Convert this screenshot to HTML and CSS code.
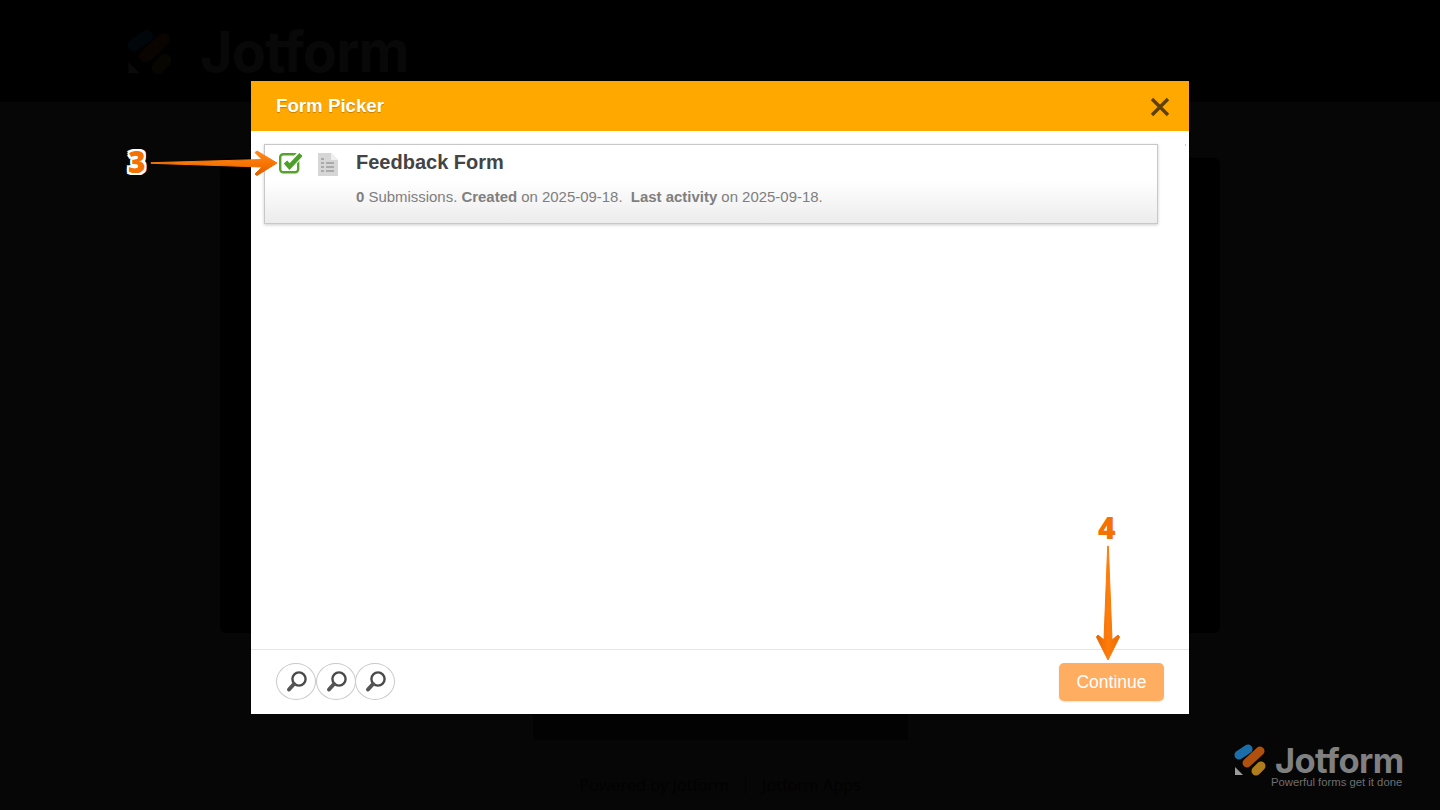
FILE: index.html
```html
<!DOCTYPE html>
<html>
<head>
    <title>Form Picker</title>
    <link rel="stylesheet" href="styles.css">
</head>
<body>
    <div class="page-header">
        <svg class="page-logo-mark" width="48" height="48" viewBox="0 0 34 34">
            <path d="M5 12 L14 6" stroke="#01060a" stroke-width="9" stroke-linecap="round"/>
            <path d="M13 20 L26 8" stroke="#0a0401" stroke-width="9" stroke-linecap="round"/>
            <path d="M22 28 L27 23" stroke="#080601" stroke-width="9" stroke-linecap="round"/>
            <path d="M1 24 L9 32 H1 Z" fill="#0a0a0a"/>
        </svg>
        <span class="page-logo-text">Jotform</span>
    </div>
    <div class="page-body">
        <div class="page-card"></div>
        <div class="page-submit"></div>
        <div class="page-footer">
            <span>Powered by Jotform</span>
            <span class="page-footer-sep"></span>
            <span>Jotform Apps</span>
        </div>
    </div>

    <div class="corner-logo">
        <svg width="34" height="34" viewBox="0 0 34 34">
            <path d="M5 12 L14 6" stroke="#1a6fa8" stroke-width="9" stroke-linecap="round"/>
            <path d="M13 20 L26 8" stroke="#b0500f" stroke-width="9" stroke-linecap="round"/>
            <path d="M22 28 L27 23" stroke="#b07d1c" stroke-width="9" stroke-linecap="round"/>
            <path d="M1 24 L9 32 H1 Z" fill="#9a9a9a"/>
        </svg>
        <div class="corner-logo-text">
            <div class="corner-logo-name">Jotform</div>
            <div class="corner-logo-tag">Powerful forms get it done</div>
        </div>
    </div>

    <div class="modal">
        <div class="modal-header">
            <span class="modal-title">Form Picker</span>
            <svg class="modal-close" width="20" height="20" viewBox="0 0 20 20">
                <path d="M2 2 L18 18 M18 2 L2 18" stroke="#5e4000" stroke-width="3.4" fill="none"/>
            </svg>
        </div>
        <div class="modal-content">
            <span class="scroll-mark"></span>
            <div class="form-row">
                <svg class="form-check" width="24" height="22" viewBox="0 0 24 22">
                    <rect x="2.2" y="2.2" width="18" height="18" rx="3" fill="#fff" stroke="#56a32c" stroke-width="2.4"/>
                    <path d="M7.5 10 L11.5 14 L22 3" stroke="#fff" stroke-width="7.5" fill="none"/>
                    <path d="M7.5 10 L11.5 14.5 L23 2.5" stroke="#4d9e2a" stroke-width="4.6" fill="none"/>
                </svg>
                <svg class="form-doc" width="20" height="23" viewBox="0 0 20 23">
                    <path d="M0 0 H13 L20 7 V23 H0 Z" fill="#d6d6d6"/>
                    <path d="M13 0 L20 7 H13 Z" fill="#efefef"/>
                    <path d="M3 6 H6 M3 10 H6 M8 10 H16 M3 14 H6 M8 14 H16 M3 18 H6 M8 18 H16" stroke="#9c9c9c" stroke-width="1.6"/>
                </svg>
                <div class="form-info">
                    <div class="form-name">Feedback Form</div>
                    <div class="form-meta"><b>0</b> Submissions. <b>Created</b> on 2025-09-18.&nbsp; <b>Last activity</b> on 2025-09-18.</div>
                </div>
            </div>
        </div>
        <div class="modal-footer">
            <div class="zoom-buttons">
                <button class="zoom-button"><svg width="24" height="24" viewBox="0 0 24 24"><circle cx="15" cy="9" r="6.6" fill="#fff" stroke="#4a4a4a" stroke-width="2.4"/><path d="M10 14 L5 19.5" stroke="#555" stroke-width="4" stroke-linecap="round"/></svg></button>
                <button class="zoom-button"><svg width="24" height="24" viewBox="0 0 24 24"><circle cx="15" cy="9" r="6.6" fill="#fff" stroke="#4a4a4a" stroke-width="2.4"/><path d="M10 14 L5 19.5" stroke="#555" stroke-width="4" stroke-linecap="round"/></svg></button>
                <button class="zoom-button"><svg width="24" height="24" viewBox="0 0 24 24"><circle cx="15" cy="9" r="6.6" fill="#fff" stroke="#4a4a4a" stroke-width="2.4"/><path d="M10 14 L5 19.5" stroke="#555" stroke-width="4" stroke-linecap="round"/></svg></button>
            </div>
            <button class="continue-button">Continue</button>
        </div>
    </div>

    <!-- tutorial annotations -->
    <span class="step-number step-3">3</span>
    <span class="step-number step-4">4</span>
    <svg class="arrows" width="1440" height="810" viewBox="0 0 1440 810">
        <defs>
            <linearGradient id="arrow-h" x1="0" y1="0" x2="0" y2="1">
                <stop offset="0" stop-color="#ff8a1c"/>
                <stop offset="0.6" stop-color="#f57100"/>
                <stop offset="1" stop-color="#d95f00"/>
            </linearGradient>
            <linearGradient id="arrow-v" x1="0" y1="0" x2="1" y2="0">
                <stop offset="0" stop-color="#e56400"/>
                <stop offset="0.5" stop-color="#ff7d0a"/>
                <stop offset="1" stop-color="#ec6a00"/>
            </linearGradient>
        </defs>
        <path d="M151 162.7 L262 159.5 L255 152.5 L257 151 L277 163 L257 175.5 L255 174 L262 167 L151 163.3 Z" fill="url(#arrow-h)" stroke="url(#arrow-h)" stroke-width="1" stroke-linejoin="round"/>
        <path d="M1107.7 546 L1104 640 L1098 635 L1096.5 637 L1108 660 L1119.5 637 L1118 635 L1112 640 L1108.3 546 Z" fill="url(#arrow-v)" stroke="url(#arrow-v)" stroke-width="1" stroke-linejoin="round"/>
    </svg>
</body>
</html>
```

FILE: styles.css
```css
html, body {
    margin: 0;
    height: 100%;
}
body {
    font-family: "Liberation Sans", Arial, sans-serif;
    background-color: #060606;
    overflow: hidden;
}
.page-header {
    height: 102px;
    box-sizing: border-box;
    padding: 2px 0 0 127px;
    background-color: #000;
    display: flex;
    align-items: center;
    gap: 25px;
}
.page-logo-text {
    font-family: "Inter", sans-serif;
    font-size: 56px;
    font-weight: 700;
    color: #080808;
    letter-spacing: -1px;
}
.page-body {
    display: flex;
    flex-direction: column;
    align-items: center;
    padding-top: 56px;
}
.page-card {
    width: 1000px;
    height: 475px;
    background-color: #000;
    border-radius: 6px;
}
.page-submit {
    width: 375px;
    height: 26px;
    margin-top: 81px;
    background-color: #020202;
}
.page-footer {
    display: flex;
    align-items: center;
    gap: 16px;
    margin-top: 34px;
    font-family: "Open Sans", sans-serif;
    font-size: 16.2px;
    color: #020202;
}
.page-footer-sep {
    width: 1px;
    height: 18px;
    background-color: #020202;
}
.corner-logo {
    position: absolute;
    left: 1234px;
    top: 743px;
    display: flex;
    gap: 3px;
}
.corner-logo-text {
    margin-top: 3px;
}
.corner-logo-name {
    margin-left: 4px;
    font-family: "Inter", sans-serif;
    font-size: 34.5px;
    line-height: 29px;
    font-weight: 700;
    color: #808080;
    letter-spacing: -0.6px;
}
.corner-logo-tag {
    font-size: 11.3px;
    line-height: 14px;
    color: #6f6f6f;
}
.modal {
    position: absolute;
    left: 251px;
    top: 81px;
    width: 938px;
    height: 633px;
    background-color: white;
    display: flex;
    flex-direction: column;
}
.modal-header {
    height: 50px;
    flex-shrink: 0;
    box-sizing: border-box;
    padding: 0 19px 0 25px;
    background-color: #ffa800;
    display: flex;
    align-items: center;
    justify-content: space-between;
}
.modal-title {
    margin-top: -1px;
    font-size: 18.7px;
    font-weight: bold;
    color: white;
    text-shadow: 0 1px 1px rgba(0, 0, 0, 0.25);
}
.modal-close {
    margin-top: 1px;
}
.modal-content {
    position: relative;
    flex: 1;
    padding: 13px 31px 0 13px;
}
.scroll-mark {
    position: absolute;
    left: 934px;
    top: 13px;
    width: 1px;
    height: 2px;
    background-color: #ccc;
}
.form-row {
    height: 80px;
    box-sizing: border-box;
    border: 1px solid #c8c8c8;
    background: linear-gradient(to bottom, #fff 45%, #ececec 100%);
    box-shadow: 0 1px 3px rgba(0, 0, 0, 0.2);
    display: flex;
    align-items: flex-start;
}
.form-check {
    margin: 7px 0 0 13px;
    flex-shrink: 0;
}
.form-doc {
    margin: 8px 0 0 16px;
    flex-shrink: 0;
}
.form-info {
    margin-left: 18px;
}
.form-name {
    margin-top: 6px;
    font-size: 20px;
    line-height: 23px;
    font-weight: bold;
    color: #444;
}
.form-meta {
    margin-top: 14px;
    font-size: 14.95px;
    line-height: 18px;
    color: #7f7f7f;
}
.modal-footer {
    height: 65px;
    box-sizing: border-box;
    border-top: 1px solid #e6e6e6;
    padding: 13px 25px 0;
    display: flex;
    justify-content: space-between;
    align-items: flex-start;
}
.zoom-buttons {
    display: flex;
}
.zoom-button {
    width: 40px;
    height: 37px;
    padding: 0;
    border: 1px solid #c9c9c9;
    border-radius: 50%;
    background-color: white;
    display: flex;
    align-items: center;
    justify-content: center;
}
.zoom-button + .zoom-button {
    margin-left: -0.5px;
}
.continue-button {
    width: 105px;
    height: 38px;
    border: none;
    border-radius: 5px;
    background-color: #ffad60;
    color: white;
    font-family: inherit;
    font-size: 17.5px;
    box-shadow: 0 1px 2px rgba(0, 0, 0, 0.1);
}
.step-number {
    position: absolute;
    font-family: "Open Sans", sans-serif;
    font-size: 30px;
    line-height: 32px;
    font-weight: 800;
    color: #f57100;
    text-shadow: -2px 0 0 #fff, 2px 0 0 #fff, 0 -2px 0 #fff, 0 2px 0 #fff, -2px -2px 0 #fff, 2px -2px 0 #fff, -2px 2px 0 #fff, 2px 2px 0 #fff;
}
.step-3 {
    left: 128px;
    top: 146px;
}
.step-4 {
    left: 1098px;
    top: 512px;
}
.arrows {
    position: absolute;
    left: 0;
    top: 0;
    pointer-events: none;
}
```
